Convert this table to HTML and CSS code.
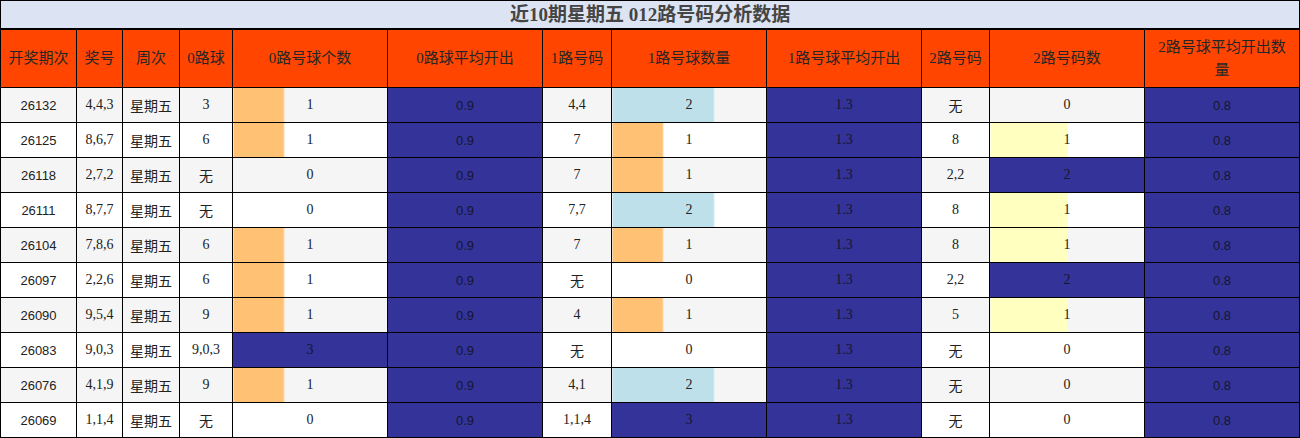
FILE: index.html
```html
<!DOCTYPE html>
<html lang="zh">
<head>
<meta charset="utf-8">
<title>近10期星期五 012路号码分析数据</title>
<link rel="stylesheet" href="styles.css">
</head>
<body>
<table class="grid">
  <colgroup>
    <col class="c-period"><col class="c-num"><col class="c-week"><col class="c-r0">
    <col class="c-wide"><col class="c-wide"><col class="c-r1"><col class="c-wide">
    <col class="c-wide"><col class="c-r2"><col class="c-wide"><col class="c-wide">
  </colgroup>
  <thead>
    <tr class="title-row"><th colspan="12">近10期星期五 012路号码分析数据</th></tr>
    <tr class="head-row">
      <th>开奖期次</th><th>奖号</th><th>周次</th><th>0路球</th><th>0路号球个数</th><th>0路球平均开出</th>
      <th>1路号码</th><th>1路号球数量</th><th>1路号球平均开出</th><th>2路号码</th><th>2路号码数</th><th class="wrap">2路号球平均开出数量</th>
    </tr>
  </thead>
  <tbody>
    <tr class="odd"><td class="sans">26132</td><td>4,4,3</td><td>星期五</td><td>3</td><td class="bar b33" style="--p:33%">1</td><td class="avg sans">0.9</td><td>4,4</td><td class="bar b66" style="--p:66%">2</td><td class="avg">1.3</td><td>无</td><td class="bar">0</td><td class="avg sans">0.8</td></tr>
    <tr><td class="sans">26125</td><td>8,6,7</td><td>星期五</td><td>6</td><td class="bar b33" style="--p:33%">1</td><td class="avg sans">0.9</td><td>7</td><td class="bar b33" style="--p:33%">1</td><td class="avg">1.3</td><td>8</td><td class="bar b50" style="--p:50%">1</td><td class="avg sans">0.8</td></tr>
    <tr class="odd"><td class="sans">26118</td><td>2,7,2</td><td>星期五</td><td>无</td><td class="bar">0</td><td class="avg sans">0.9</td><td>7</td><td class="bar b33" style="--p:33%">1</td><td class="avg">1.3</td><td>2,2</td><td class="bar full">2</td><td class="avg sans">0.8</td></tr>
    <tr><td class="sans">26111</td><td>8,7,7</td><td>星期五</td><td>无</td><td class="bar">0</td><td class="avg sans">0.9</td><td>7,7</td><td class="bar b66" style="--p:66%">2</td><td class="avg">1.3</td><td>8</td><td class="bar b50" style="--p:50%">1</td><td class="avg sans">0.8</td></tr>
    <tr class="odd"><td class="sans">26104</td><td>7,8,6</td><td>星期五</td><td>6</td><td class="bar b33" style="--p:33%">1</td><td class="avg sans">0.9</td><td>7</td><td class="bar b33" style="--p:33%">1</td><td class="avg">1.3</td><td>8</td><td class="bar b50" style="--p:50%">1</td><td class="avg sans">0.8</td></tr>
    <tr><td class="sans">26097</td><td>2,2,6</td><td>星期五</td><td>6</td><td class="bar b33" style="--p:33%">1</td><td class="avg sans">0.9</td><td>无</td><td class="bar">0</td><td class="avg">1.3</td><td>2,2</td><td class="bar full">2</td><td class="avg sans">0.8</td></tr>
    <tr class="odd"><td class="sans">26090</td><td>9,5,4</td><td>星期五</td><td>9</td><td class="bar b33" style="--p:33%">1</td><td class="avg sans">0.9</td><td>4</td><td class="bar b33" style="--p:33%">1</td><td class="avg">1.3</td><td>5</td><td class="bar b50" style="--p:50%">1</td><td class="avg sans">0.8</td></tr>
    <tr><td class="sans">26083</td><td>9,0,3</td><td>星期五</td><td>9,0,3</td><td class="bar full">3</td><td class="avg sans">0.9</td><td>无</td><td class="bar">0</td><td class="avg">1.3</td><td>无</td><td class="bar">0</td><td class="avg sans">0.8</td></tr>
    <tr class="odd"><td class="sans">26076</td><td>4,1,9</td><td>星期五</td><td>9</td><td class="bar b33" style="--p:33%">1</td><td class="avg sans">0.9</td><td>4,1</td><td class="bar b66" style="--p:66%">2</td><td class="avg">1.3</td><td>无</td><td class="bar">0</td><td class="avg sans">0.8</td></tr>
    <tr><td class="sans">26069</td><td>1,1,4</td><td>星期五</td><td>无</td><td class="bar">0</td><td class="avg sans">0.9</td><td>1,1,4</td><td class="bar full">3</td><td class="avg">1.3</td><td>无</td><td class="bar">0</td><td class="avg sans">0.8</td></tr>
  </tbody>
</table>
</body>
</html>
```

FILE: styles.css
```css
html, body {
  margin: 0;
  padding: 0;
  background: #ffffff;
}

.grid {
  width: 1300px;
  border-collapse: collapse;
  table-layout: fixed;
  font-family: "Liberation Serif", "Noto Sans CJK SC", serif;
  color: #222222;
}

.c-period { width: 76px; }
.c-num { width: 46px; }
.c-week { width: 57px; }
.c-r0 { width: 53px; }
.c-wide { width: 155px; }
.c-r1 { width: 69px; }
.c-r2 { width: 68px; }

.grid th,
.grid td {
  border: 1px solid #000000;
  padding: 0;
  text-align: center;
  vertical-align: middle;
}

.title-row th {
  height: 27px;
  background: #dce3f2;
  color: #454545;
  font-size: 19px;
  font-weight: bold;
  border-bottom: 2px solid #000000;
  line-height: 26px;
}

.head-row th {
  height: 57px;
  background: #ff4500;
  color: #262626;
  font-size: 15px;
  font-weight: normal;
  line-height: 23px;
  padding: 0 4px;
}

.head-row th.wrap {
  padding: 0 10px;
}

.grid td {
  height: 34px;
  font-size: 14px;
  background: #ffffff;
}

.grid tr.odd td {
  background: #f5f5f5;
}

.grid td.sans {
  font-family: "Liberation Sans", "Noto Sans CJK SC", sans-serif;
  font-size: 13px;
}

.grid td.avg,
.grid tr.odd td.avg,
.grid td.full,
.grid tr.odd td.full {
  background: #333399;
  color: #161630;
}

.grid td.b33 {
  background: linear-gradient(to right, #ffc174 0, #ffc174 calc(var(--p) - 1px), #ffd9a8 calc(var(--p) - 1px), #ffd9a8 var(--p), #ffffff var(--p));
}
.grid tr.odd td.b33 {
  background: linear-gradient(to right, #ffc174 0, #ffc174 calc(var(--p) - 1px), #ffd9a8 calc(var(--p) - 1px), #ffd9a8 var(--p), #f5f5f5 var(--p));
}

.grid td.b50 {
  background: linear-gradient(to right, #ffffc0 0, #ffffc0 var(--p), #ffffff var(--p));
}
.grid tr.odd td.b50 {
  background: linear-gradient(to right, #ffffc0 0, #ffffc0 var(--p), #f5f5f5 var(--p));
}

.grid td.b66 {
  background: linear-gradient(to right, #bde0ea 0, #bde0ea calc(var(--p) - 1px), #d6ebf1 calc(var(--p) - 1px), #d6ebf1 var(--p), #ffffff var(--p));
}
.grid tr.odd td.b66 {
  background: linear-gradient(to right, #bde0ea 0, #bde0ea calc(var(--p) - 1px), #d6ebf1 calc(var(--p) - 1px), #d6ebf1 var(--p), #f5f5f5 var(--p));
}
```
